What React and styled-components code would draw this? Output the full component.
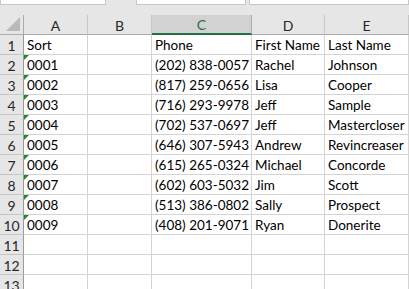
import React from "react";
import styled, { createGlobalStyle } from "styled-components";

const Global = createGlobalStyle`
  html, body { margin: 0; padding: 0; background: #ffffff; overflow: hidden; }
  * { box-sizing: border-box; }
`;

const Sheet = styled.div`
  width: 409px;
  height: 289px;
  overflow: hidden;
  background: #ffffff;
  font-family: Lato, "Open Sans", sans-serif;
`;

const TopBar = styled.div`
  height: 15px;
  background: #e6e6e6;
  display: flex;
  align-items: flex-start;
`;

const Field = styled.div`
  height: 5px;
  width: ${(p) => p.$w}px;
  margin-left: ${(p) => p.$ml || 0}px;
  flex: ${(p) => (p.$grow ? 1 : "none")};
  background: #ffffff;
  border: 1px solid #c6c6c6;
  border-top: none;
`;

const Grid = styled.div`
  display: grid;
  grid-template-columns: 24px 64px 64px 100px 73px 84px;
  grid-auto-rows: 20px;
`;

const Corner = styled.div`
  background: #e6e6e6;
  border-right: 1px solid #ababab;
  border-bottom: 1px solid #ababab;
  position: relative;
  &::after {
    content: "";
    position: absolute;
    right: 3px;
    bottom: 3px;
    width: 0;
    height: 0;
    border-left: 14px solid transparent;
    border-bottom: 14px solid #b9b9b9;
  }
`;

const ColHead = styled.div`
  background: ${(p) => (p.$sel ? "#d2d2d2" : "#e6e6e6")};
  border-right: 1px solid ${(p) => (p.$sel ? "#ababab" : "#c6c6c6")};
  border-bottom: ${(p) => (p.$sel ? "2px solid #217346" : "1px solid #ababab")};
  color: ${(p) => (p.$sel ? "#217346" : "#262626")};
  font-size: 14px;
  display: flex;
  align-items: center;
  justify-content: center;
  padding-top: 1px;
`;

const RowHead = styled.div`
  background: #e6e6e6;
  border-right: 1px solid #9b9b9b;
  border-bottom: 1px solid #c6c6c6;
  color: #262626;
  font-size: 14px;
  display: flex;
  align-items: center;
  justify-content: center;
  padding-top: 1px;
`;

const Cell = styled.div`
  border-right: 1px solid #d4d4d4;
  border-bottom: 1px solid #d4d4d4;
  color: #000000;
  font-size: 13.5px;
  line-height: 20px;
  padding-left: 3px;
  white-space: nowrap;
  overflow: visible;
  position: relative;
  ${(p) =>
    p.$flag &&
    `
    &::before {
      content: "";
      position: absolute;
      left: 0;
      top: 0;
      width: 0;
      height: 0;
      border-top: 5px solid #1e8a2c;
      border-right: 5px solid transparent;
    }
  `}
`;

const cols = ["A", "B", "C", "D", "E"];

const data = [
  ["Sort", "", "Phone", "First Name", "Last Name"],
  ["0001", "", "(202) 838-0057", "Rachel", "Johnson"],
  ["0002", "", "(817) 259-0656", "Lisa", "Cooper"],
  ["0003", "", "(716) 293-9978", "Jeff", "Sample"],
  ["0004", "", "(702) 537-0697", "Jeff", "Mastercloser"],
  ["0005", "", "(646) 307-5943", "Andrew", "Revincreaser"],
  ["0006", "", "(615) 265-0324", "Michael", "Concorde"],
  ["0007", "", "(602) 603-5032", "Jim", "Scott"],
  ["0008", "", "(513) 386-0802", "Sally", "Prospect"],
  ["0009", "", "(408) 201-9071", "Ryan", "Donerite"],
  ["", "", "", "", ""],
  ["", "", "", "", ""],
  ["", "", "", "", ""],
];

export default function App() {
  return (
    <Sheet>
      <Global />
      <TopBar>
        <Field $w={106} />
        <Field $w={110} $ml={30} />
        <Field $grow $ml={3} />
      </TopBar>
      <Grid>
        <Corner />
        {cols.map((c) => (
          <ColHead key={c} $sel={c === "C"}>
            {c}
          </ColHead>
        ))}
        {data.map((row, r) => (
          <React.Fragment key={r}>
            <RowHead>{r + 1}</RowHead>
            {row.map((v, c) => (
              <Cell key={c} $flag={c === 0 && r >= 1 && r <= 9}>
                {v}
              </Cell>
            ))}
          </React.Fragment>
        ))}
      </Grid>
    </Sheet>
  );
}
